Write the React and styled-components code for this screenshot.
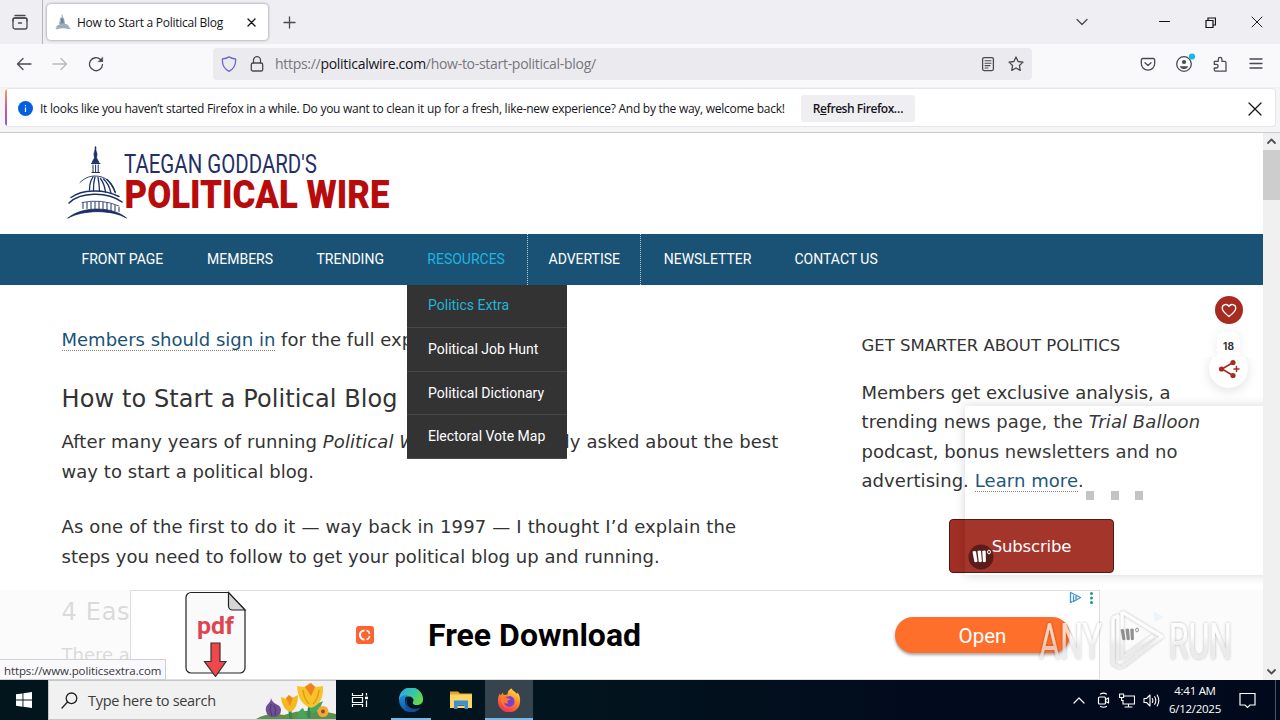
import React from "react";
import styled, { createGlobalStyle, css } from "styled-components";

const Global = createGlobalStyle`
  *, *::before, *::after { box-sizing: border-box; }
  html, body { margin: 0; padding: 0; overflow: hidden; }
  svg { display: block; flex: none; }
  p, h1, h2, h3 { margin: 0; font-weight: 400; }
`;

const ui = `"Open Sans", "Noto Sans", sans-serif`;
const verdana = `"DejaVu Sans", sans-serif`;
const roboto = `Roboto, sans-serif`;

const Desktop = styled.div`
  position: relative;
  width: 1280px;
  height: 720px;
  display: flex;
  flex-direction: column;
  overflow: hidden;
  background: #fff;
  font-family: ${ui};
  white-space: nowrap;
`;

/* ---------- browser chrome ---------- */
const TabStrip = styled.div`
  height: 44px;
  display: flex;
  align-items: center;
  background: #eeeef3;
`;
const RecentTabs = styled.div`
  width: 43px;
  height: 44px;
  padding: 13px 0 0 11px;
  border-right: 1px solid #b5b5bc;
`;
const Tab = styled.div`
  width: 221px;
  height: 36px;
  margin-left: 4px;
  padding: 0 10px 0 8px;
  display: flex;
  align-items: center;
  background: #fff;
  border-radius: 4px;
  box-shadow: 0 0 3px rgba(0, 0, 0, 0.45);
`;
const TabTitle = styled.span`
  flex: 1;
  margin-left: 6px;
  font-size: 12px;
  letter-spacing: -0.26px;
  color: #15141a;
`;
const NewTab = styled.div`
  margin-left: 15px;
`;
const WindowButtons = styled.div`
  margin-left: auto;
  display: flex;
  align-items: center;
  padding-right: 17px;
`;
const Gap = styled.span`
  width: ${(p) => p.$w}px;
  flex: none;
`;
const Toolbar = styled.div`
  height: 44px;
  display: flex;
  align-items: center;
  padding: 0 16px 4px;
  background: #f9f9fb;
  border-bottom: 1px solid #f1f1f3;
`;
const UrlBar = styled.div`
  width: 819px;
  height: 32px;
  margin-left: 109px;
  padding: 0 8px;
  display: flex;
  align-items: center;
  border-radius: 4px;
  background: #ebebef;
`;
const Url = styled.span`
  flex: 1;
  margin-left: 10px;
  font-size: 14px;
  letter-spacing: -0.29px;
  color: #77767c;
  b { font-weight: 400; color: #15141a; }
`;
const Actions = styled.div`
  margin-left: auto;
  display: flex;
  align-items: center;
  gap: 20px;
`;
const NoticeArea = styled.div`
  height: 45px;
  padding: 0 4px 4px 5px;
  background: #f5f5f7;
  border-bottom: 1px solid #c9c9ce;
`;
const Notice = styled.div`
  position: relative;
  height: 39px;
  display: flex;
  align-items: center;
  padding: 2px 13px 0 13px;
  background: #fff;
  border: 1px solid #e6e6ea;
  border-left: 0;
  border-radius: 4px;
  overflow: hidden;
  &::before {
    content: "";
    position: absolute;
    left: 0;
    top: 0;
    width: 2px;
    height: 100%;
    background: linear-gradient(#f0a070, #d0589a 50%, #9059d8);
  }
`;
const NoticeText = styled.span`
  margin-left: 7px;
  width: 745px;
  font-size: 12px;
  letter-spacing: -0.264px;
  color: #15141a;
`;
const RefreshButton = styled.div`
  width: 114px;
  height: 27px;
  margin: 0 auto 0 16px;
  display: flex;
  align-items: center;
  justify-content: center;
  border-radius: 3px;
  background: #efeff2;
  font-size: 12px;
  font-weight: 600;
  letter-spacing: -0.45px;
  color: #15141a;
`;

/* ---------- page ---------- */
const Viewport = styled.div`
  position: relative;
  height: 547px;
  display: flex;
  overflow: hidden;
`;
const Page = styled.div`
  position: relative;
  width: 1263px;
  height: 547px;
  overflow: hidden;
  background: #fff;
`;
const Scrollbar = styled.div`
  width: 17px;
  display: flex;
  flex-direction: column;
  align-items: center;
  background: #f0f0f0;
  padding: 5px 0 5px;
`;
const Thumb = styled.div`
  width: 17px;
  height: 50px;
  margin: 6px 0 auto;
  background: #cdcdcd;
`;
const Masthead = styled.header`
  height: 101px;
  padding: 10px 0 0 62px;
`;
const Nav = styled.nav`
  height: 51px;
  display: flex;
  padding-left: 61px;
  background: #1a5276;
`;
const NavItem = styled.div`
  position: relative;
  width: ${(p) => p.$w}px;
  height: 51px;
  padding-left: ${(p) => p.$pad || 20.5}px;
  font: 400 14px/50px ${roboto};
  color: ${(p) => (p.$active ? "#1fb5dc" : "#fff")};
  ${(p) => p.$divider && css`border-right: 1px dotted #b9cbd6;`}
`;
const Submenu = styled.div`
  position: absolute;
  z-index: 3;
  left: 1px;
  top: 51px;
  width: 160px;
  height: 174px;
  display: flex;
  flex-direction: column;
  background: #333;
`;
const SubmenuItem = styled.div`
  flex: 1;
  padding-left: 21px;
  font: 400 14px/42px ${roboto};
  color: ${(p) => (p.$active ? "#1fb5dc" : "#fff")};
  border-bottom: 1px solid #484848;
  &:first-child { flex: 0 0 43px; line-height: 40px; }
`;
const Columns = styled.div`
  display: flex;
  padding-left: 61.5px;
  font-family: ${verdana};
  color: #333;
`;
const Article = styled.article`
  width: 800px;
  padding-top: 40px;
`;
const Para = styled.p`
  font-size: 18px;
  line-height: 29.4px;
  margin-bottom: ${(p) => p.$mb || 0}px;
`;
const Line = styled.span`
  display: block;
  letter-spacing: ${(p) => p.$ls || 0}px;
`;
const Heading = styled.h2`
  font-size: 24px;
  line-height: 36px;
  margin-bottom: ${(p) => p.$mb}px;
  letter-spacing: ${(p) => p.$ls || 0}px;
`;
const Anchor = styled.a`
  color: #1a5276;
  border-bottom: 1px dotted #888;
`;
const Aside = styled.aside`
  width: 360px;
  padding-top: 47px;
`;
const AsideTitle = styled.h3`
  font-size: 16.5px;
  line-height: 28px;
  margin-bottom: 18px;
`;
const Subscribe = styled.div`
  width: 165px;
  height: 54px;
  margin: 23px 0 0 87.5px;
  border: 1px solid #4a1412;
  border-radius: 4px;
  background: #a22f25;
  color: #fff;
  font-size: 16.5px;
  letter-spacing: -0.15px;
  line-height: 53px;
  text-align: center;
`;

/* ---------- floating layers on the page ---------- */
const VideoPopup = styled.div`
  position: absolute;
  left: 965px;
  top: 273px;
  width: 310px;
  height: 169px;
  background: rgba(255, 255, 255, 0.03);
  box-shadow: 0 0 10px rgba(0, 0, 0, 0.16);
`;
const Dots = styled.div`
  position: absolute;
  left: 121px;
  top: 85px;
  display: flex;
  gap: 16.5px;
`;
const Dot = styled.i`
  width: 8px;
  height: 9px;
  background: #c4c4c4;
`;
const MBadge = styled.div`
  position: absolute;
  left: 3px;
  top: 138px;
`;
const ShareRail = styled.div`
  position: absolute;
  left: 1209px;
  top: 163px;
  width: 40px;
  display: flex;
  flex-direction: column;
  align-items: center;
`;
const HeartButton = styled.div`
  width: 28px;
  height: 28px;
  display: grid;
  place-items: center;
  border-radius: 50%;
  background: #a62c22;
`;
const ShareCount = styled.div`
  width: 23px;
  height: 30px;
  margin: 8px 1px 0 0;
  padding-top: 7px;
  border-radius: 8px 8px 0 0;
  background: #fff;
  box-shadow: 0 0 12px rgba(0, 0, 0, 0.07);
  font: 700 10px/14px Inter, sans-serif;
  text-align: center;
  color: #333;
`;
const ShareButton = styled.div`
  width: 39px;
  height: 39px;
  margin: -13px 1px 0 0;
  display: grid;
  place-items: center;
  border-radius: 50%;
  background: #fff;
  box-shadow: 0 3px 12px rgba(0, 0, 0, 0.12);
  clip-path: inset(8px -20px -20px -20px);
`;
const AdStrip = styled.div`
  position: absolute;
  left: 0;
  top: 457px;
  width: 1263px;
  height: 90px;
  padding-left: 130px;
  background: rgba(250, 250, 250, 0.84);
`;
const Ad = styled.div`
  position: relative;
  width: 970px;
  height: 90px;
  display: flex;
  align-items: center;
  background: #fff;
  border: 1px solid #dedede;
  padding-left: 54px;
`;
const PdfSlot = styled.div`
  margin-bottom: 2px;
`;
const AdTitle = styled.div`
  margin-left: 54.5px;
  width: 213px;
  font: 700 32px/38px ${roboto};
  color: #000;
`;
const AdButton = styled.div`
  width: 175px;
  height: 36px;
  margin-left: 254px;
  border-radius: 18px;
  background: #ff6f2c;
  box-shadow: 0 2px 3px rgba(0, 0, 0, 0.35);
  font: 400 20.5px/38px ${roboto};
  text-align: center;
  color: #fff;
`;
const AdMarks = styled.div`
  position: absolute;
  right: 3px;
  top: 0;
  display: flex;
  gap: 5px;
`;
const StatusTip = styled.div`
  position: absolute;
  left: 0;
  bottom: 0;
  width: 166px;
  height: 21px;
  padding-left: 4px;
  background: #f9f9fb;
  border: 1px solid #cfcfd4;
  border-left: 0;
  font-size: 11.5px;
  line-height: 21px;
  letter-spacing: -0.11px;
  color: #38373d;
`;
const Watermark = styled.div`
  position: absolute;
  z-index: 5;
  left: 1034px;
  top: 604px;
`;

/* ---------- taskbar ---------- */
const Taskbar = styled.footer`
  height: 40px;
  display: flex;
  align-items: center;
  background: linear-gradient(90deg, #02151c, #02141e 45%, #020a1d 75%, #010a1c);
  color: #fff;
`;
const StartButton = styled.div`
  width: 48px;
  padding-left: 16px;
`;
const SearchBox = styled.div`
  width: 288px;
  height: 40px;
  display: flex;
  align-items: center;
  padding-left: 12px;
  background: #f1f1f1;
  border: 1px solid #c4c6c8;
  border-right: 0;
`;
const SearchText = styled.span`
  flex: 1;
  margin-left: 10px;
  font-size: 14.5px;
  letter-spacing: -0.3px;
  color: #3c3c3c;
`;
const AppSlot = styled.div`
  width: ${(p) => p.$w || 48}px;
  height: 40px;
  display: flex;
  align-items: center;
  justify-content: center;
  background: ${(p) => (p.$active ? "#35444d" : "transparent")};
  ${(p) => p.$line && css`
    background-image: linear-gradient(#76b9ed, #76b9ed);
    background-repeat: no-repeat;
    background-position: center bottom;
    background-size: ${p.$line}px 2px;
  `}
`;
const Tray = styled.div`
  margin-left: auto;
  display: flex;
  align-items: center;
  height: 40px;
`;
const Clock = styled.div`
  width: 60px;
  margin: 0 14px 0 5px;
  font-size: 11.5px;
  line-height: 18px;
  letter-spacing: -0.28px;
  text-align: center;
`;
const PeekEdge = styled.div`
  width: 5px;
  height: 40px;
  margin-left: 19px;
  border-left: 1px solid #4a5560;
`;

/* ---------- icons ---------- */
const Icon = ({ s = 16, w = s, h = s, c = "#4a4952", sw = 1.3, vb, children }) => (
  <svg width={w} height={h} viewBox={vb || `0 0 ${w} ${h}`} fill="none" stroke={c} strokeWidth={sw} strokeLinecap="round" strokeLinejoin="round">
    {children}
  </svg>
);

const TabsIcon = () => (
  <Icon s={18}><path d="M4 2.500h10" /><rect x="2" y="5" width="14" height="11" rx="2" /><path d="M2 8V7a2 2 0 0 1 2-2h10a2 2 0 0 1 2 2v1M7.500 10h3" /></Icon>
);
const Favicon = () => (
  <Icon s={16} c="#9cabb8" sw={1}>
    <path d="M7.200 4V1" />
    <path d="M6 4h2.500l1 6h-4.500z" fill="#6d8497" />
    <path d="M3 11.500q4-3 9.500-.5l1 1.500H2z" fill="#a3b2be" />
    <path d="M1.500 14.300q6-2 13 0" strokeWidth="1.800" />
  </Icon>
);
const Cross = ({ s, c, sw }) => <Icon s={s} c={c} sw={sw}><path d={`M1 1 ${s - 1} ${s - 1}M${s - 1} 1 1 ${s - 1}`} /></Icon>;
const Shield = () => <Icon s={16} c="#6b66cf"><path d="M8 .9c2 1.300 4.300 1.900 6.600 2.100.3 4.600-1.500 9.700-6.600 12.300C2.900 12.700 1.100 7.600 1.400 3 3.700 2.800 6 2.200 8 .9z" /></Icon>;
const Lock = () => <Icon s={16}><rect x="2.300" y="7" width="11.400" height="8" rx="1.600" /><path d="M4.500 7V4.200a3.500 3.500 0 0 1 7 0V7" /></Icon>;
const Reader = () => <Icon s={16}><rect x="2.600" y="1.600" width="10.800" height="13" rx="1.500" /><path d="M5 4.700h6M5 7.200h6M5 9.600h5M5 12h3" strokeWidth="1.100" /></Icon>;
const StarIcon = () => <Icon s={16}><path d="m8 1 2.100 4.500 4.900.6-3.600 3.400.9 4.900L8 12l-4.300 2.400.9-4.900L1 6.100l4.900-.6z" /></Icon>;
const Pocket = () => <Icon s={16}><path d="M2.800 2.500h10.400a1.500 1.500 0 0 1 1.500 1.500v3.500a6.700 6.700 0 0 1-13.400 0V4a1.500 1.500 0 0 1 1.500-1.500z" /><path d="m5 6.700 3 2.800 3-2.800" /></Icon>;
const AccountSlot = styled.div`
  width: 16px;
  height: 20px;
  margin-bottom: 4px;
`;
const Account = () => (
  <AccountSlot>
    <Icon w={20} h={20}>
      <circle cx="8" cy="12" r="7.300" /><circle cx="8" cy="10" r="2.100" fill="#4a4952" stroke="none" />
      <path d="M4 14.200h8c0 1.600-1.600 2.800-4 2.800s-4-1.200-4-2.800z" fill="#4a4952" stroke="none" />
      <circle cx="16" cy="4.500" r="3.100" fill="#10b9e6" stroke="none" />
    </Icon>
  </AccountSlot>
);
const Puzzle = () => <Icon s={16}><path d="M2.300 5.300h4V3.200a1.800 1.800 0 0 1 3.600 0v2.100h2.600a1.500 1.500 0 0 1 1.500 1.500V15.200H3.800a1.500 1.500 0 0 1-1.500-1.500V12H4.300a1.800 1.800 0 0 0 0-3.600h-2z" /></Icon>;
const InfoIcon = () => <Icon s={15} c="none"><circle cx="7.500" cy="7.500" r="7.500" fill="#0560df" /><path d="M6.900 6.500h1.200V11H6.900zM6.900 3.900h1.200v1.300H6.900z" fill="#fff" /></Icon>;

const Logo = () => (
  <svg width="330" height="80" viewBox="62 143 330 80">
    <g fill="none" stroke="#1c2f63" strokeLinecap="round">
      <path d="M95.500 147v6" strokeWidth="1.500" />
      <path d="M95.500 150l1.500 4-.5 4 2.500 4.500h-7l2.500-4.500-.5-4z" fill="#1c2f63" strokeWidth=".8" />
      <path d="M91.500 163.500h8.500M92 172.500h7.500" strokeWidth="1" />
      <path d="M93 165v7M95.600 165v7M98.200 165v7" strokeWidth="1" />
      <path d="M80 182.500c4-4 9-6.500 15-6.500 10 0 18 6 20.500 17" strokeWidth=".9" />
      <path d="M89.500 190q0-8 3.500-13M93.500 191q-.3-8 1.500-14M99.500 191q-.3-8-1.500-13.500M105.500 192q-1-8-5-13.500M111 193q-2-9-7.500-14" strokeWidth="1.300" />
      <path d="M115 192q-3-8-8-12.500" strokeWidth="1.500" />
      <path d="M71 197.500c11-8 32-9 48-1" strokeWidth="1.400" />
      <path d="M69 203c11-11 38-12 53-1" strokeWidth="1.500" />
      <path d="M83 203v5.500M87 202.500v6M91 202.200v6.500M95 202v6.500M99 202v6.500M103 202.500v6.500M107 203.200v6.500M111 204v6.500M115 205.500v5.500M119 207.500v4" strokeWidth="1" />
      <path d="M82 202.500q20-4 37 3.500" strokeWidth=".8" />
      <path d="M68 218c14-12 44-12 58.500 0-15-8.500-43-8.500-58.500 0z" fill="#1c2f63" strokeWidth=".8" />
    </g>
    <text x="124" y="173" textLength="193" lengthAdjust="spacingAndGlyphs" fontFamily={roboto} fontSize="25.200" fill="#232f66">TAEGAN GODDARD'S</text>
    <text x="124.500" y="207.500" textLength="265" lengthAdjust="spacingAndGlyphs" fontFamily={roboto} fontWeight="900" fontSize="39.500" fill="#b80c0c">POLITICAL WIRE</text>
  </svg>
);

const MGlyph = ({ color }) => (
  <g fill={color} stroke="none">
    <path d="M4.500 7.500q2.500-1 3.500 0l1.500 10q-2 1.500-3.200 0zM9.500 7q2.500-1 3.500 0l.9 10.500q-2 1.500-3.200 0zM14.200 7q2.500-1 3.500 0l.2 10.500q-2 1.500-3 0z" />
    <ellipse cx="21" cy="8" rx="1.400" ry="1.900" fill="none" stroke={color} strokeWidth="1" />
  </g>
);

const PdfIcon = () => (
  <svg width="62" height="86" viewBox="0 0 62 86">
    <path d="M6 1.500h37.500L60 19v58a5 5 0 0 1-5 5H6a5 5 0 0 1-5-5V6.500a5 5 0 0 1 5-5z" fill="#fafafa" stroke="#222" strokeWidth="1.200" />
    <path d="M43.500 1.500V15a4 4 0 0 0 4 4H60z" fill="#d6d6d8" stroke="#222" strokeWidth="1.200" />
    <text x="12" y="43" textLength="37" lengthAdjust="spacingAndGlyphs" fontFamily={roboto} fontWeight="700" fontSize="23" fill="#dd4650">pdf</text>
    <path d="M26 52h9v18.500h6L30.500 85.500 19.500 70.500H26z" fill="#f0474b" stroke="#333" strokeWidth="1.200" />
  </svg>
);

const Flowers = () => (
  <svg width="80" height="38" viewBox="256 681 80 38">
    <path d="M256 719q12-7 28-4 22-8 52-1v5z" fill="#5f8f4c" />
    <path d="M271 698q0 3-2 5-4 3-3 8 1 6 8 6 7-1 7-7 0-4-5-6-4-2-5-6z" fill="#6d5091" />
    <path d="M271 704q-2 6 1 12M274 705q3 5 1 11" stroke="#4c376f" fill="none" />
    <path d="M290 709q0 6 1 10M311 703q-3 8-2 15" stroke="#2e8b4e" strokeWidth="3" fill="none" />
    <path d="M297 718q1-8 6-10l5 11zM323 701q-3 10-11 13l-2-7z" fill="#45a65c" />
    <path d="M281 697l5 2 3-4 3 3 6-3q0 14-8 17-8-3-9-15z" fill="#f5b91d" />
    <path d="M286 698l3-3 4 3-3 8z" fill="#ee8c1b" />
    <path d="M297 686l7 1 6-4 6 4 7-1q1 18-12 22-13-4-14-22z" fill="#f8c22a" />
    <path d="M305 687l6-4 4 4-4 9z" fill="#ee8123" />
    <path d="M303 690q1 9 6 14M319 690q-1 9-6 14" stroke="#e69a12" strokeWidth="1.500" fill="none" />
    <circle cx="323" cy="711.500" r="5.500" fill="#f2a93b" /><circle cx="323" cy="711.500" r="2" fill="#9a4b1d" />
  </svg>
);

const EdgeIcon = () => (
  <svg width="24" height="24" viewBox="0 0 24 24">
    <defs>
      <linearGradient id="eg" x1="0" y1="0" x2="1" y2=".5"><stop offset="0" stopColor="#2aa5e8" /><stop offset=".6" stopColor="#36c6a8" /><stop offset="1" stopColor="#63d84c" /></linearGradient>
      <linearGradient id="eb" x1="0" y1="0" x2="0" y2="1"><stop offset="0" stopColor="#1a8ddc" /><stop offset="1" stopColor="#0f59ab" /></linearGradient>
    </defs>
    <path d="M0 11A12 12 0 0 1 24 11.500c0 4-3 5.500-6 5.500-3.500 0-5-1.500-4-3 1.500-2.500-.5-5.500-4-5.500C5 8.500 1 10 0 13z" fill="url(#eg)" />
    <path d="M0 12c1-4 5-5.500 9-4.500C5 9 5 14.500 8 18c3 3.500 9 4 13.500 1.500A12 12 0 0 1 0 12z" fill="url(#eb)" />
    <path d="M9.500 9.500c-3 2.500-2 8.500 3 10.500 4 1.500 7 1 9.500-1-2.500 4-7.500 6-12 4.700C5 21 4.500 12 9.500 9.500z" fill="#134b8e" opacity=".75" />
  </svg>
);
const FolderIcon = () => (
  <svg width="22" height="20" viewBox="0 0 22 20">
    <path d="M0 1.500h8l2 2h12V18H0z" fill="#e8a427" /><path d="M0 4.500h22V18H0z" fill="#fbd667" />
    <path d="M4 10.500h14V19h-3.500v-4.500h-7V19H4z" fill="#3d8fcf" /><path d="M7.500 14.500h7V16h-7z" fill="#2b6fae" />
  </svg>
);
const FirefoxIcon = () => (
  <svg width="24" height="24" viewBox="0 0 24 24">
    <defs><linearGradient id="ff" x1=".8" y1="0" x2=".3" y2="1"><stop offset="0" stopColor="#ffe14a" /><stop offset=".45" stopColor="#ff8a26" /><stop offset="1" stopColor="#ee2a5b" /></linearGradient></defs>
    <path d="M14.500.5c1 2 4 3.500 5.500 5.500l.5-1.500c2 2.500 3 5.500 2.500 9A11 11 0 0 1 1 13.500c-.3-3.500.5-6 2-8l.5 2L6 4.500l.5 2.500 4-.5c0-2.500 1.500-5 4-6z" fill="url(#ff)" />
    <path d="M8 8.500c2 .5 3 0 5-.5 3 .5 5 3 4.500 6.500a5.500 5.500 0 0 1-10.500.5c1.500 1 3.500 1 4.500-.5L8.500 12z" fill="#7a3fd0" />
    <path d="M4 10c2-2.500 5-1.500 6 0 1 1 3 .3 3.500 1-1 1.500-3 1-3.500 2.500-1 1.500-3 1-3.500.5 0 3 2.500 5 5.500 5-4 1.500-8-1.500-8-9z" fill="#ff7a2a" />
  </svg>
);

const NAV = [
  { label: "FRONT PAGE", w: 125 },
  { label: "MEMBERS", w: 110, pad: 21 },
  { label: "TRENDING", w: 110 },
  { label: "RESOURCES", w: 122, pad: 21.3, active: true, divider: true },
  { label: "ADVERTISE", w: 113, divider: true },
  { label: "NEWSLETTER", w: 133, pad: 22.7 },
  { label: "CONTACT US", w: 125 },
];
const SUBMENU = ["Politics Extra", "Political Job Hunt", "Political Dictionary", "Electoral Vote Map"];

export default function App() {
  return (
    <Desktop>
      <Global />
      <TabStrip>
        <RecentTabs><TabsIcon /></RecentTabs>
        <Tab>
          <Favicon />
          <TabTitle>How to Start a Political Blog</TabTitle>
          <Gap $w={3} />
          <Cross s={9} c="#15141a" sw={1.4} />
          <Gap $w={2} />
        </Tab>
        <NewTab><Icon s={13}><path d="M6.500 1v11M1 6.500h11" /></Icon></NewTab>
        <WindowButtons>
          <Icon w={12} h={8}><path d="m1 1.500 5 5 5-5" /></Icon>
          <Gap $w={71} />
          <Icon w={11} h={2} c="#111" sw={1}><path d="M.5.500h10" /></Icon>
          <Gap $w={35} />
          <Icon s={11} c="#111" sw={1.2}><path d="M1 3.500h7v7H1zM3 3.500V1h7.500v7H8" strokeLinejoin="miter" /></Icon>
          <Gap $w={35} />
          <Cross s={12} c="#222" sw={1} />
        </WindowButtons>
      </TabStrip>

      <Toolbar>
        <Icon s={16}><path d="M15 8H1.500M7 2.500 1.500 8 7 13.500" /></Icon>
        <Gap $w={20} />
        <Icon s={16} c="#b9b9be"><path d="M1 8h13.500M9 2.500 14.500 8 9 13.500" /></Icon>
        <Gap $w={20} />
        <Icon s={16}><path d="M14.500 8.500a6.500 6.500 0 1 1-2-5L14.200 5" /><path d="M14.700 1.300v4.400h-4.400z" fill="#4a4952" strokeWidth=".5" /></Icon>
        <UrlBar>
          <Shield />
          <Gap $w={12} />
          <Lock />
          <Url>https://<b>politicalwire.com</b>/how-to-start-political-blog/</Url>
          <Reader />
          <Gap $w={12} />
          <StarIcon />
        </UrlBar>
        <Actions>
          <Pocket />
          <Account />
          <Puzzle />
          <Icon s={16}><path d="M2 3h12M2 7.500h12M2 12h12" /></Icon>
        </Actions>
      </Toolbar>

      <NoticeArea>
        <Notice>
          <InfoIcon />
          <NoticeText>It looks like you haven’t started Firefox in a while. Do you want to clean it up for a fresh, like-new experience? And by the way, welcome back!</NoticeText>
          <RefreshButton>R<u>e</u>fresh Firefox…</RefreshButton>
          <Cross s={14} c="#15141a" sw={1.3} />
        </Notice>
      </NoticeArea>

      <Viewport>
        <Page>
          <Masthead><Logo /></Masthead>
          <Nav>
            {NAV.map((n) => (
              <NavItem key={n.label} $w={n.w} $pad={n.pad} $active={n.active} $divider={n.divider}>
                {n.label}
                {n.active && (
                  <Submenu>
                    {SUBMENU.map((s, i) => <SubmenuItem key={s} $active={i === 0}>{s}</SubmenuItem>)}
                  </Submenu>
                )}
              </NavItem>
            ))}
          </Nav>
          <Columns>
            <Article>
              <Para $mb={27}><Anchor>Members should sign in</Anchor> for the full experience.</Para>
              <Heading $mb={10} $ls={0.1}>How to Start a Political Blog</Heading>
              <Para $mb={26}>
                <Line $ls={0.09}>After many years of running <em>Political Wire</em>, I’m frequently asked about the best</Line>
                <Line $ls={0.05}>way to start a political blog.</Line>
              </Para>
              <Para $mb={23}>
                <Line $ls={0.15}>As one of the first to do it — way back in 1997 — I thought I’d explain the</Line>
                <Line $ls={0.04}>steps you need to follow to get your political blog up and running.</Line>
              </Para>
              <Heading $mb={10} $ls={0.7}>4 Easy Steps</Heading>
              <Para>There are just</Para>
            </Article>
            <Aside>
              <AsideTitle>GET SMARTER ABOUT POLITICS</AsideTitle>
              <Para>
                <Line>Members get exclusive analysis, a</Line>
                <Line $ls={0.07}>trending news page, the <em>Trial Balloon</em></Line>
                <Line $ls={0.02}>podcast, bonus newsletters and no</Line>
                <Line $ls={0.07}>advertising. <Anchor>Learn more</Anchor>.</Line>
              </Para>
              <Subscribe>Subscribe</Subscribe>
            </Aside>
          </Columns>

          <VideoPopup>
            <Dots><Dot /><Dot /><Dot /></Dots>
            <MBadge>
              <svg width="26" height="26" viewBox="0 0 26 26"><circle cx="13" cy="13" r="12.500" fill="#5b1d1a" /><MGlyph color="#fff" /></svg>
            </MBadge>
          </VideoPopup>

          <ShareRail>
            <HeartButton>
              <Icon w={16} h={15} c="#fff" sw={1.3}><path d="M8 13.500C4 10.500 1.200 8 1.200 5A3.600 3.600 0 0 1 8 3.500 3.600 3.600 0 0 1 14.800 5c0 3-2.800 5.500-6.800 8.500z" /></Icon>
            </HeartButton>
            <ShareCount>18</ShareCount>
            <ShareButton>
              <Icon w={22} h={20} c="#a62c22" sw={1.5}>
                <path d="M15 3.500 4 10l11 6.500M16 10h5M18.500 7.500v5" />
                <g fill="#a62c22" stroke="none"><circle cx="15" cy="3.500" r="2.600" /><circle cx="3.500" cy="10" r="2.600" /><circle cx="15" cy="16.500" r="2.600" /></g>
              </Icon>
            </ShareButton>
          </ShareRail>

          <AdStrip>
            <Ad>
              <PdfSlot><PdfIcon /></PdfSlot>
              <Gap $w={108.5} />
              <svg width="18" height="18" viewBox="0 0 18 18">
                <rect width="18" height="18" rx="3" fill="#fb6430" />
                <path d="M8.500 4.500a4.500 4.500 0 1 0 0 9" fill="none" stroke="#fff" strokeWidth="2.200" />
                <path d="M10.500 4.300a4.800 4.800 0 0 1 3.200 3.700M10.500 13.700a4.800 4.800 0 0 0 3.200-3.700" fill="none" stroke="#fff" strokeWidth="1.500" />
              </svg>
              <AdTitle>Free Download</AdTitle>
              <AdButton>Open</AdButton>
              <AdMarks>
                <Icon w={13} h={13} c="#3f92cf" sw={1.3}><path d="M1.500 1.500 11.500 6.500l-7 4V5M1.500 1.500v10l1.500-.700M7 5.500v2.500" /></Icon>
                <svg width="9" height="14" viewBox="0 0 9 14" fill="#159a9c"><circle cx="4.500" cy="2.500" r="1.500" /><circle cx="4.500" cy="7" r="1.500" /><circle cx="4.500" cy="11.500" r="1.500" /></svg>
              </AdMarks>
            </Ad>
          </AdStrip>
        </Page>
        <Scrollbar>
          <Icon w={9} h={6} c="#505050" sw={1.8}><path d="M1 5l3.500-3.500L8 5" /></Icon>
          <Thumb />
          <Icon w={9} h={6} c="#505050" sw={1.8}><path d="M1 1l3.500 3.500L8 1" /></Icon>
        </Scrollbar>
        <StatusTip>https://www.politicsextra.com</StatusTip>
      </Viewport>

      <Taskbar>
        <StartButton>
          <svg width="16" height="16" viewBox="0 0 16 16" fill="#fff"><path d="M0 2.300l6.500-.9v6.200H0zM7.400 1.300 16 0v7.600H7.400zM0 8.500h6.500v6.200L0 13.800zM7.400 8.500H16V16l-8.600-1.200z" /></svg>
        </StartButton>
        <SearchBox>
          <Icon s={17} c="#222" sw={1.3}><circle cx="10.500" cy="6.300" r="5.300" /><path d="M6.500 10 1 16" /></Icon>
          <SearchText>Type here to search</SearchText>
          <Flowers />
        </SearchBox>
        <AppSlot $w={48}>
          <Icon w={18} h={16} c="#fff" sw={1.2}><path d="M1.500 1v2.500h10V1M1.500 5.500h10v5h-10zM1.500 15v-2.500h10V15M15.500 1v2.500M15.500 8.500V15" strokeLinecap="butt" strokeLinejoin="miter" /><path d="M14 4.700h3v2.500h-3z" fill="#fff" stroke="none" /></Icon>
        </AppSlot>
        <AppSlot $w={53} $line={40}><EdgeIcon /></AppSlot>
        <AppSlot $w={48}><FolderIcon /></AppSlot>
        <AppSlot $w={48} $active $line={48}><FirefoxIcon /></AppSlot>
        <Tray>
          <Icon w={12} h={7} c="#fff" sw={1.2}><path d="m1 6 5-5 5 5" /></Icon>
          <Gap $w={12} />
          <Icon w={13} h={16} c="#fff" sw={1.2}><rect x="1.500" y="5" width="7" height="7" rx="1" /><path d="m8.500 7.500 3-1.500v5l-3-1.500M3.500 2Q6.500.300 9.500 2M3.500 14.500q3 1.500 6 0" /></Icon>
          <Gap $w={9} />
          <Icon w={16} h={15} c="#fff" sw={1.1}><path d="M5 3h10.500v8H4V7.500M9.500 11v3M6 14h7" strokeLinejoin="miter" /><path d="M.600 1h4v3.500h-4zM2.600 4.500v3H4" /></Icon>
          <Gap $w={8} />
          <Icon w={17} h={15} c="#fff" sw={1.1}><path d="M1 5.500h2.500L7 2v11L3.500 9.500H1zM9.300 5.500q1.200 2 0 4M11.700 3.700q2.200 3.800 0 7.600M14.200 2q3.200 5.500 0 11" /></Icon>
          <Clock>4:41 AM<br />6/12/2025</Clock>
          <Icon w={17} h={17} c="#fff" sw={1.2}><path d="M1 1.500h15v11.500h-5L8.500 15.500 6 13H1z" strokeLinejoin="miter" /></Icon>
          <PeekEdge />
        </Tray>
      </Taskbar>

      <Watermark>
        <svg width="204" height="72" viewBox="1034 604 204 72">
          <defs>
            <filter id="soft" x="-10%" y="-15%" width="120%" height="130%"><feDropShadow dx="0" dy="0" stdDeviation="1.500" floodColor="#000" floodOpacity=".4" /></filter>
            <linearGradient id="fade" gradientUnits="userSpaceOnUse" x1="0" y1="636" x2="0" y2="646"><stop offset="0" stopColor="#fff" /><stop offset="1" stopColor="#e6e6e6" /></linearGradient>
          </defs>
          <g filter="url(#soft)" opacity=".72">
            <g fill="url(#fade)" fontFamily={roboto} fontSize="50">
              <text x="1039" y="659" textLength="63" lengthAdjust="spacingAndGlyphs">ANY</text>
              <text x="1169" y="659" textLength="63" lengthAdjust="spacingAndGlyphs">RUN</text>
            </g>
            <path d="M1122 612l40 24.500-40 30.500M1122 612v46l31-22M1113 618v46l8 4M1113 618l5-2v44" fill="none" stroke="url(#fade)" strokeWidth="3" strokeLinejoin="round" />
          </g>
          <g transform="translate(1116 622)" opacity=".8"><MGlyph color="#777" /></g>
          <path d="M1153 611l11 6-9 5z" fill="#e3f1f9" opacity=".6" />
        </svg>
      </Watermark>
    </Desktop>
  );
}
